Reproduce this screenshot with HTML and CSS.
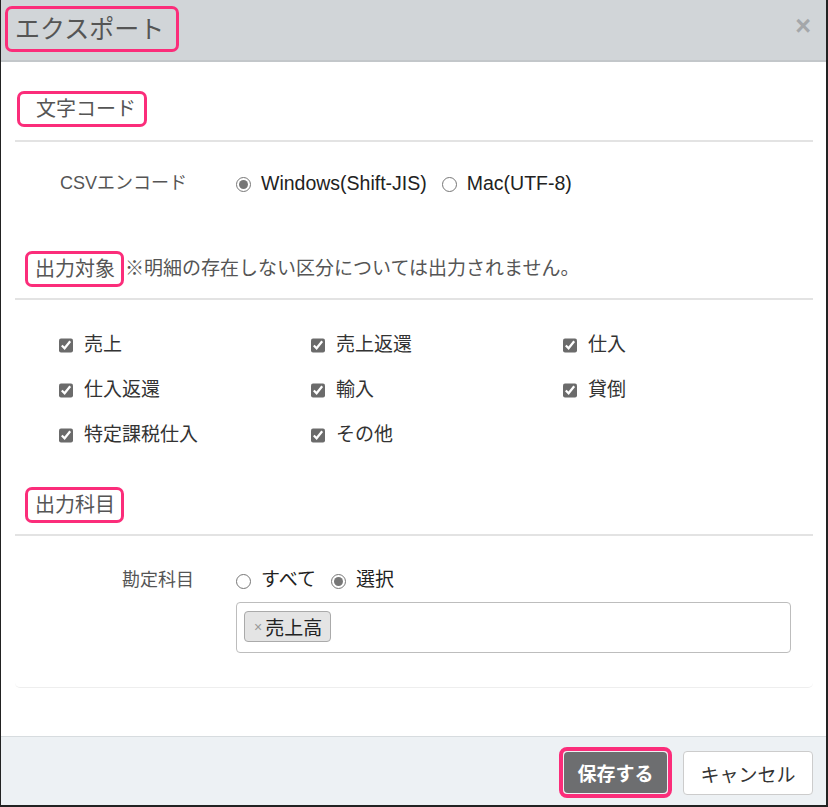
FILE: index.html
```html
<!DOCTYPE html>
<html>
<head>
    <link rel="stylesheet" href="styles.css">
</head>
<body>
    <div class="dialog">
        <div class="dialog-header">
            <span class="mark title">エクスポート</span>
            <span class="close">×</span>
        </div>

        <div class="dialog-body">
            <div class="panel">
                <div class="sec-head sec-1">
                    <span class="mark sec-title wide">文字コード</span>
                </div>
                <div class="form-row row-csv">
                    <div class="form-label">CSVエンコード</div>
                    <div class="options">
                        <label><input type="radio" name="enc" checked> <b>Windows(Shift-JIS)</b></label>
                        <label><input type="radio" name="enc"> <b>Mac(UTF-8)</b></label>
                    </div>
                </div>

                <div class="sec-head sec-2">
                    <span class="mark sec-title">出力対象</span>
                    <span class="note">※明細の存在しない区分については出力されません。</span>
                </div>
                <div class="check-grid">
                    <label><input type="checkbox" checked> 売上</label>
                    <label><input type="checkbox" checked> 売上返還</label>
                    <label><input type="checkbox" checked> 仕入</label>
                    <label><input type="checkbox" checked> 仕入返還</label>
                    <label><input type="checkbox" checked> 輸入</label>
                    <label><input type="checkbox" checked> 貸倒</label>
                    <label><input type="checkbox" checked> 特定課税仕入</label>
                    <label><input type="checkbox" checked> その他</label>
                </div>

                <div class="sec-head sec-3">
                    <span class="mark sec-title">出力科目</span>
                </div>
                <div class="form-row row-acc">
                    <div class="form-label">勘定科目</div>
                    <div class="options">
                        <label><input type="radio" name="acc"> すべて</label>
                        <label><input type="radio" name="acc" checked> 選択</label>
                    </div>
                </div>
                <div class="tag-row">
                    <div class="tag-box">
                        <span class="tag"><span class="tag-x">×</span>売上高</span>
                    </div>
                </div>
            </div>
        </div>

        <div class="dialog-footer">
            <span class="mark save-mark"><button class="btn btn-save">保存する</button></span>
            <button class="btn btn-cancel">キャンセル</button>
        </div>
    </div>
</body>
</html>
```

FILE: styles.css
```css
html, body {
    margin: 0;
    padding: 0;
}
body {
    font-family: "Liberation Sans", "Noto Sans CJK JP", sans-serif;
    color: #333;
    background: #fff;
}
.dialog {
    width: 828px;
    height: 807px;
    box-sizing: border-box;
    border-left: 1px solid #222;
    border-right: 2px solid #222;
    border-bottom: 2px solid #222;
    display: flex;
    flex-direction: column;
}
.mark {
    border: 3px solid #fb2d7a;
    border-radius: 7px;
}
.dialog-header {
    height: 62px;
    box-sizing: border-box;
    background: #d1d5d8;
    border-bottom: 2px solid #c3c7ca;
    display: flex;
    align-items: flex-start;
    justify-content: space-between;
    padding: 6px 15px 0 4px;
}
.title {
    font-size: 25px;
    line-height: 40px;
    color: #555;
    padding: 0 12px 0 7px;
}
.close {
    font-size: 27px;
    font-weight: bold;
    color: #a4a7aa;
    line-height: 22px;
    margin-top: 9px;
}
.dialog-body {
    flex: 1;
    padding: 0 13px 0 14px;
}
.panel {
    border-radius: 0 0 5px 5px;
    border-bottom: 1px solid #eeeeee;
    padding-bottom: 34px;
}
.sec-head {
    box-sizing: border-box;
    display: flex;
    align-items: flex-end;
    border-bottom: 2px solid #e3e3e3;
    padding-bottom: 11px;
}
.sec-1 {
    height: 80px;
    padding-bottom: 13px;
}
.sec-2 {
    height: 98px;
}
.sec-3 {
    height: 90px;
}
.sec-title {
    font-size: 20px;
    line-height: 30px;
    color: #555;
    margin-left: 10px;
    padding: 0 6px 0 7px;
}
.sec-title.wide {
    margin-left: 2px;
    padding: 0 8px 0 16px;
}
.note {
    font-size: 19px;
    line-height: 30px;
    color: #555;
    margin-left: 1px;
    margin-bottom: 3px;
}
.form-row {
    display: flex;
    align-items: center;
}
.row-csv {
    height: 60px;
    padding-top: 30px;
    box-sizing: border-box;
    align-items: flex-start;
}
.row-acc {
    padding-top: 33px;
}
.form-label {
    width: 179px;
    text-align: right;
    font-size: 18px;
    line-height: 22px;
    color: #555;
}
.row-csv .form-label {
    font-size: 18px;
    width: 172px;
    margin-right: 7px;
}
.options {
    display: flex;
    margin-left: 42px;
    gap: 15px;
}
.options label {
    display: flex;
    align-items: center;
    gap: 10px;
    font-size: 19px;
    line-height: 22px;
    color: #222;
}
.options b {
    font-weight: normal;
    font-size: 19.5px;
}
input[type=radio] {
    width: 15px;
    height: 15px;
    margin: 3px 0 0 0;
    accent-color: #777;
}
.check-grid {
    display: grid;
    grid-template-columns: 252px 252px 252px;
    row-gap: 23px;
    padding: 34px 0 0 43px;
}
.check-grid label {
    display: flex;
    align-items: center;
    gap: 11px;
    font-size: 19px;
    line-height: 22px;
    color: #333;
}
input[type=checkbox] {
    width: 14px;
    height: 15px;
    margin: 1px 0 0 1px;
    accent-color: #6b6b6b;
}
.tag-row {
    padding: 11px 22px 0 221px;
}
.tag-box {
    height: 51px;
    box-sizing: border-box;
    border: 1px solid #bdbdbd;
    border-radius: 4px;
    padding: 8px 7px;
}
.tag {
    display: inline-flex;
    align-items: center;
    height: 31px;
    box-sizing: border-box;
    padding: 0 8px 0 9px;
    background: #e4e4e4;
    border: 1px solid #aaa;
    border-radius: 4px;
    font-size: 19px;
    color: #222;
}
.tag-x {
    font-size: 14px;
    color: #999;
    margin-right: 3px;
}
.dialog-footer {
    height: 69px;
    box-sizing: border-box;
    background: #edf1f4;
    border-top: 1px solid #d7dcdf;
    display: flex;
    justify-content: flex-end;
    align-items: flex-start;
    padding: 10px 13px 0 0;
    gap: 11px;
}
.save-mark {
    display: flex;
    padding: 1px;
    border-width: 4px;
    border-radius: 8px;
}
.btn {
    font-family: "Liberation Sans", "Noto Sans CJK JP", sans-serif;
    font-size: 19px;
    border-radius: 4px;
    cursor: pointer;
}
.btn-save {
    width: 103px;
    height: 41px;
    background: #6d6e70;
    color: #fff;
    border: none;
    font-weight: bold;
}
.btn-cancel {
    width: 130px;
    height: 44px;
    margin-top: 4px;
    background: #fff;
    color: #333;
    border: 1px solid #ccc;
}
```
